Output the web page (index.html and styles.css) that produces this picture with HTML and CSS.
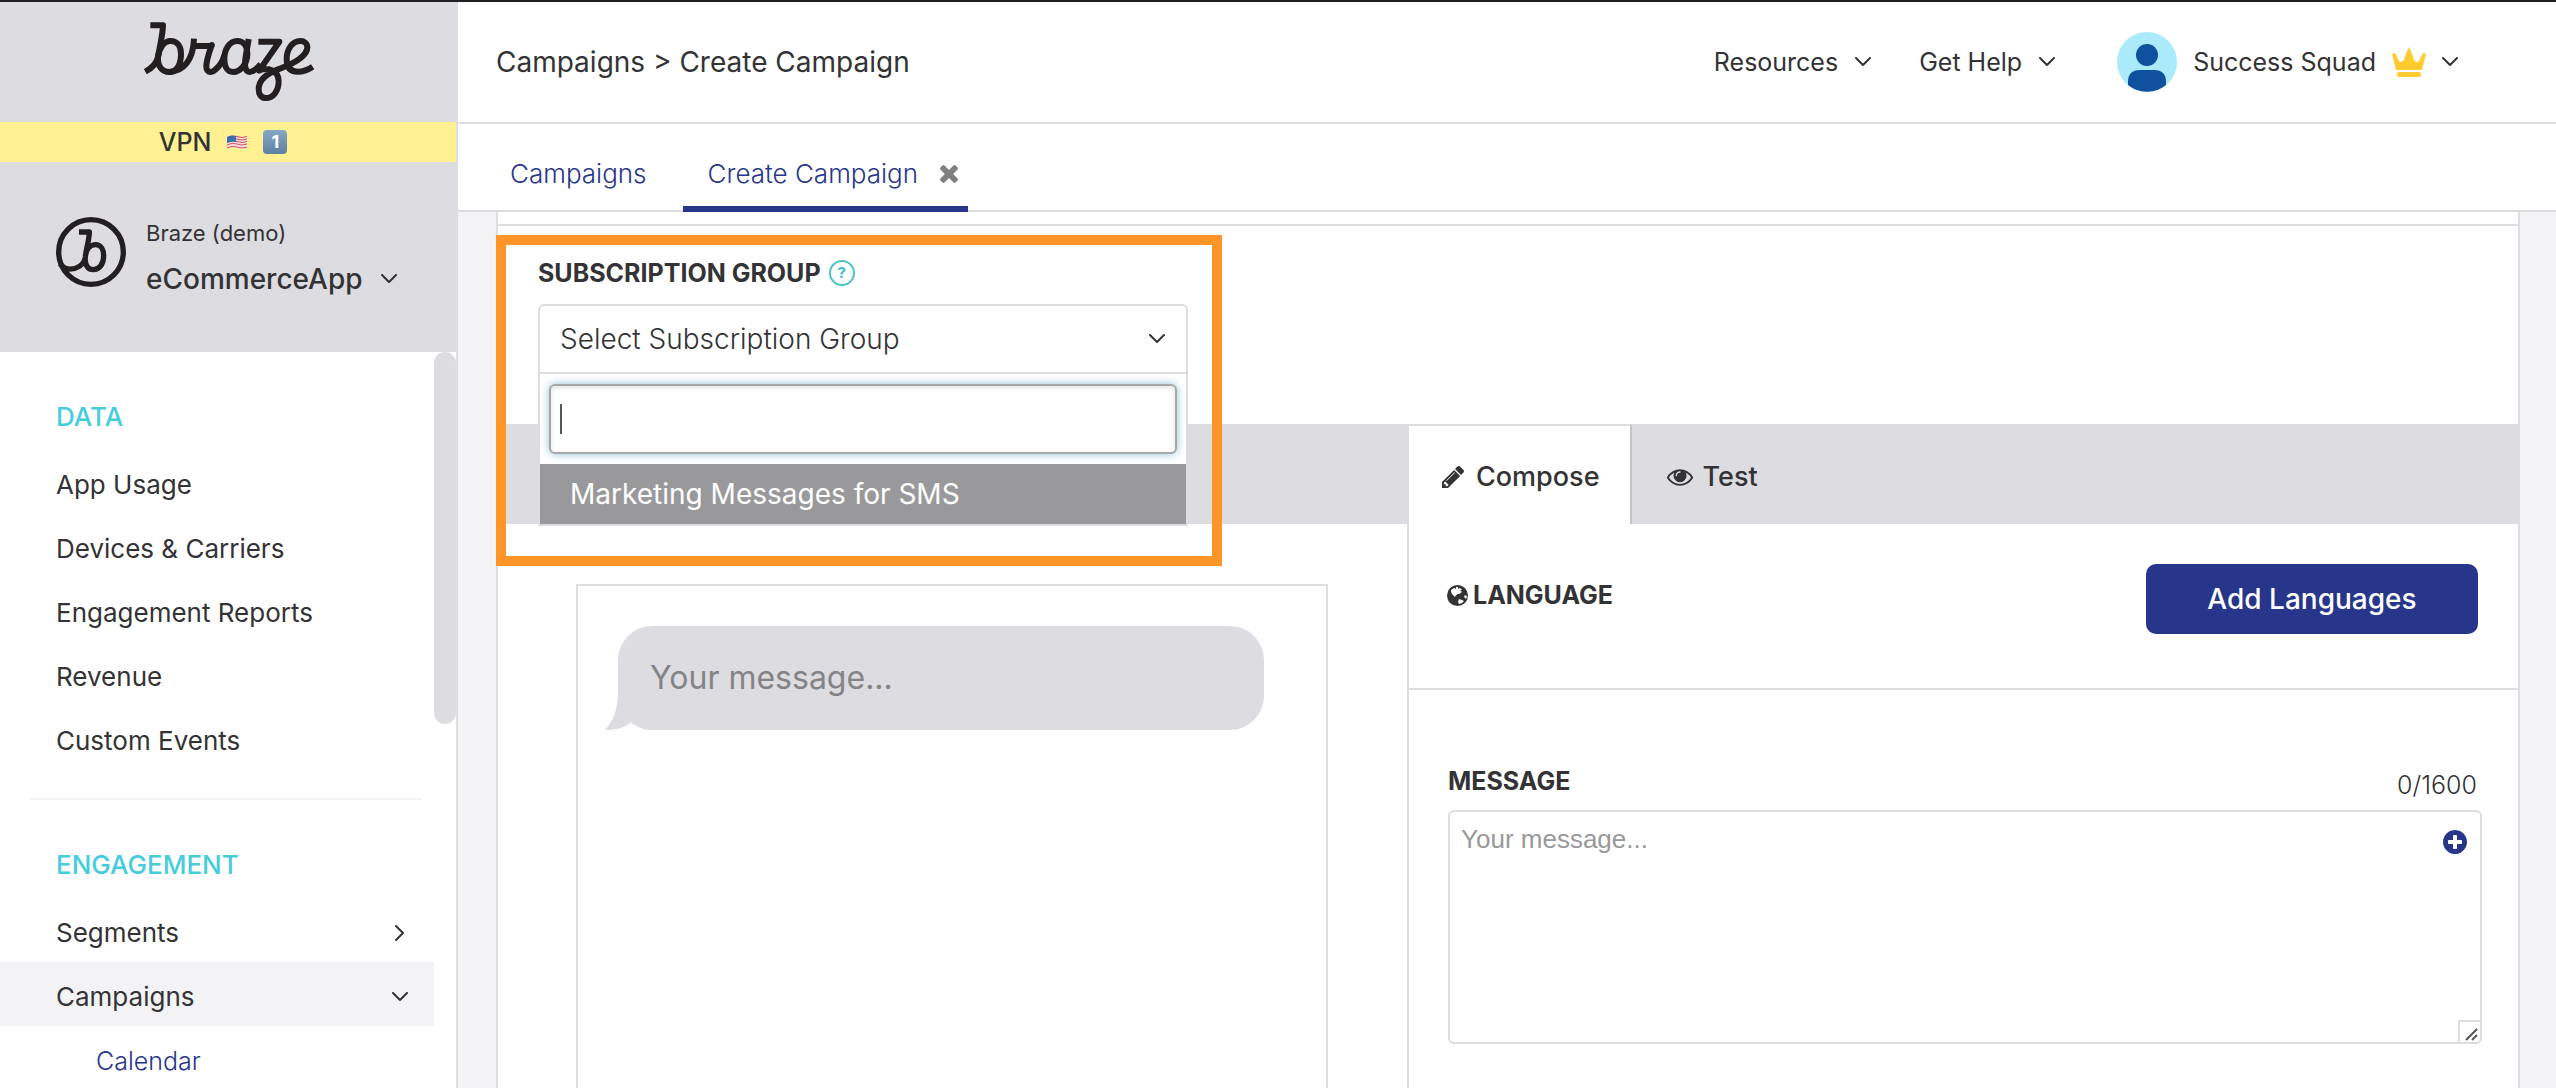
FILE: index.html
```
<!DOCTYPE html>
<html lang="en">
<head>
<meta charset="utf-8">
<title>Create Campaign</title>
<link rel="stylesheet" href="styles.css">
</head>
<body>
<svg class="sprite" aria-hidden="true">
  <symbol id="chevron" viewBox="0 0 16 10"><path d="M1 1l7 7 7-7" fill="none" stroke="currentColor" stroke-width="2" stroke-linecap="round" stroke-linejoin="round"/></symbol>
</svg>
<div class="app">
  <aside class="sidebar">
    <div class="brand">
      <svg width="170" height="80" viewBox="432 62 510 240" role="img" aria-label="Braze" fill="none" stroke="#231f20" stroke-width="18" stroke-linecap="butt" stroke-linejoin="round">
        <path d="M451 75H489C488 105 479 140 474 170C469 192 455 204 436 214"/>
        <path d="M474 170C478 142 492 122 512 122C532 122 543 138 543 160C543 192 531 215 508 215C485 215 472 196 474 170"/>
        <path d="M508 215C550 213 580 180 582 115"/>
        <path d="M579 137H632C637 137 636 130 634 137C626 160 619 180 619 198C619 214 630 219 642 211C655 202 668 185 673 165"/>
        <path d="M742 160C742 137 730 122 712 122C688 122 673 148 673 175C673 200 683 215 699 215C722 215 742 190 742 160"/>
        <path d="M746 116C742 145 735 170 735 192C735 212 745 218 757 213C768 208 775 200 782 192"/>
        <path d="M775 124H838L777 211C800 200 836 208 836 243C836 274 818 293 798 293C783 293 776 282 776 267C776 232 810 215 842 204C885 188 922 165 922 141C922 129 913 122 901 122C876 122 860 148 860 176C860 202 872 214 893 214C912 214 926 207 938 199"/>
      </svg>
    </div>
    <div class="vpn">
      <span>VPN</span>
      <svg width="22" height="17" viewBox="0 0 22 17" role="img" aria-label="US flag">
        <path d="M1 3Q6 0 11 2T21 2V14Q16 16 11 14T1 15Z" fill="#f2dfe0"/>
        <g fill="none" stroke="#d9505c" stroke-width="1"><path d="M1 3.500Q6 .5 11 2.500T21 2.500M1 6Q6 3 11 5T21 5M1 8.500Q6 5.500 11 7.500T21 7.500M1 11Q6 8 11 10T21 10M1 14Q6 11 11 13T21 13"/></g>
        <path d="M1 3Q5 1 10 2V8Q5 7 1 9Z" fill="#3d6fae"/>
      </svg>
      <span class="keycap">1</span>
    </div>
    <div class="account">
      <svg width="70" height="70" viewBox="168 650 210 210" aria-hidden="true" fill="none" stroke="#231f20" stroke-linejoin="round">
        <circle cx="273" cy="755" r="97" stroke-width="16"/>
        <path stroke-width="16" d="M237 695H268C268 720 258 745 256 770C253 795 228 808 205 806C195 805 187 798 180 790M256 770C258 745 272 733 287 733C304 733 311 750 311 766C311 790 299 808 280 808C262 808 254 792 256 770"/>
      </svg>
      <div class="account-text">
        <span class="company">Braze (demo)</span>
        <button class="app-switch" type="button">eCommerceApp <svg width="16" height="10"><use href="#chevron"/></svg></button>
      </div>
    </div>
    <div class="nav-scroll">
      <nav class="nav">
        <h2 class="nav-title">DATA</h2>
        <ul>
          <li><a href="#">App Usage</a></li>
          <li><a href="#">Devices &amp; Carriers</a></li>
          <li><a href="#">Engagement Reports</a></li>
          <li><a href="#">Revenue</a></li>
          <li><a href="#">Custom Events</a></li>
        </ul>
        <hr>
        <h2 class="nav-title">ENGAGEMENT</h2>
        <ul>
          <li><a href="#">Segments <svg class="closed" width="16" height="10"><use href="#chevron"/></svg></a></li>
          <li class="open"><a href="#">Campaigns <svg width="16" height="10"><use href="#chevron"/></svg></a></li>
          <li class="child"><a href="#">Calendar</a></li>
        </ul>
      </nav>
      <div class="scrollbar"><div class="thumb"></div></div>
    </div>
  </aside>

  <main class="main">
    <header class="topbar">
      <h1>Campaigns &gt; Create Campaign</h1>
      <div class="menus">
        <button class="menu" type="button">Resources <svg width="16" height="10"><use href="#chevron"/></svg></button>
        <button class="menu" type="button">Get Help <svg width="16" height="10"><use href="#chevron"/></svg></button>
        <button class="menu user" type="button">
          <svg class="avatar" width="60" height="60" viewBox="0 0 60 60" aria-hidden="true">
            <circle cx="30" cy="30" r="30" fill="#abeafa"/>
            <circle cx="30" cy="23" r="11" fill="#0f509f"/>
            <path d="M11 53V50Q11 38 23 38H37Q49 38 49 50V53A30 30 0 0 1 11 53Z" fill="#0f509f"/>
          </svg>
          Success Squad
          <svg width="34" height="30" viewBox="0 0 34 30" aria-hidden="true" fill="#ffcb2f">
            <path d="M0 7L3 6 7 14Q9 16 11 14 13 12 13 9L17 0 21 9Q21 12 23 14 25 16 27 14L31 6 34 7 30 23H4Z"/>
            <rect x="5" y="25" width="24" height="5" rx="2"/>
          </svg>
          <svg width="16" height="10"><use href="#chevron"/></svg>
        </button>
      </div>
    </header>
    <nav class="tabs">
      <a href="#">Campaigns</a>
      <a href="#" class="active">Create Campaign
        <svg width="18" height="18" viewBox="302 366 1188 1188" fill="#7f7f7f" aria-label="Close tab"><path d="M1490 1322q0 40-28 68l-136 136q-28 28-68 28t-68-28l-294-294-294 294q-28 28-68 28t-68-28l-136-136q-28-28-28-68t28-68l294-294-294-294q-28-28-28-68t28-68l136-136q28-28 68-28t68 28l294 294 294-294q28-28 68-28t68 28l136 136q28 28 28 68t-28 68l-294 294 294 294q28 28 28 68z"/></svg>
      </a>
    </nav>

    <div class="panel">
      <section class="subscription">
        <label class="label" for="group">SUBSCRIPTION GROUP <span class="help">?</span></label>
        <div class="picker">
          <select id="group"><option>Select Subscription Group</option></select>
          <svg class="picker-arrow" width="16" height="10"><use href="#chevron"/></svg>
          <div class="dropdown">
            <div class="search">
              <input type="text" aria-label="Search subscription groups">
              <span class="caret"></span>
            </div>
            <ul role="listbox"><li role="option" aria-selected="true">Marketing Messages for SMS</li></ul>
          </div>
        </div>
        <div class="highlight"></div>
      </section>

      <section class="composer">
        <div class="preview">
          <div class="band"></div>
          <div class="phone">
            <div class="bubble">Your message...
              <svg class="tail" width="30" height="40" viewBox="0 0 30 40" aria-hidden="true"><path d="M13 0C13 20 8 31 0 40C9 40 18 39 25 33L30 0Z" fill="#dddce1"/></svg>
            </div>
          </div>
        </div>
        <div class="editor">
          <div class="editor-tabs">
            <button class="editor-tab active" type="button">
              <svg width="22" height="22" viewBox="128 149 1515 1515" fill="currentColor" aria-hidden="true"><path d="M491 1536l91-91-235-235-91 91v107h128v128h107zm523-928q0-22-22-22-10 0-17 7l-542 542q-7 7-7 17 0 22 22 22 10 0 17-7l542-542q7-7 7-17zm-54-192l416 416-832 832h-416v-416zm683 96q0 53-37 90l-166 166-416-416 166-165q36-38 90-38 53 0 91 38l235 234q37 39 37 91z"/></svg>
              Compose</button>
            <button class="editor-tab" type="button">
              <svg width="26" height="17" viewBox="0 384 1792 1152" fill="currentColor" aria-hidden="true"><path d="M1664 960q-152-236-381-353 61 104 61 225 0 185-131.500 316.500t-316.500 131.500-316.500-131.500-131.500-316.500q0-121 61-225-229 117-381 353 133 205 333.500 326.500t434.500 121.500 434.500-121.500 333.500-326.500zm-720-384q0-20-14-34t-34-14q-125 0-214.500 89.500t-89.500 214.500q0 20 14 34t34 14 34-14 14-34q0-86 61-147t147-61q20 0 34-14t14-34zm848 384q0 34-20 69-140 230-376.500 368.500t-499.500 138.500-499.500-139-376.500-368q-20-35-20-69t20-69q140-229 376.500-368t499.500-139 499.500 139 376.500 368q20 35 20 69z"/></svg>
              Test</button>
          </div>
          <div class="language">
            <h3 class="label">
              <svg width="21" height="21" viewBox="0 0 21 21" aria-hidden="true"><circle cx="10.500" cy="10.500" r="10.500" fill="#333335"/><g fill="#fff"><path d="M4 5L7 3 9 4 9 2 11 2 11 4 13 3 15 5 13 5 15 7 12 9 10 9 10 10 9 10 8 12 5 9 4 7Z" /><path d="M12 14L15 15 17 16 15 18 12 19 11 17Z"/><path d="M18 10L20 11 19 14 17 12Z"/></g></svg>
              LANGUAGE</h3>
            <button class="primary" type="button">Add Languages</button>
          </div>
          <div class="message">
            <div class="message-head">
              <label class="label" for="message">MESSAGE</label>
              <span class="count">0/1600</span>
            </div>
            <div class="message-box">
              <textarea id="message" placeholder="Your message..."></textarea>
              <button class="add" type="button" aria-label="Add personalization"><svg width="24" height="24" viewBox="128 128 1536 1536" fill="#27368b" aria-hidden="true"><path d="M1344 960v-128q0-26-19-45t-45-19h-256v-256q0-26-19-45t-45-19h-128q-26 0-45 19t-19 45v256h-256q-26 0-45 19t-19 45v128q0 26 19 45t45 19h256v256q0 26 19 45t45 19h128q26 0 45-19t19-45v-256h256q26 0 45-19t19-45zm320-64q0 209-103 385.500t-279.500 279.500-385.500 103-385.500-103-279.500-279.500-103-385.500 103-385.500 279.500-279.500 385.500-103 385.500 103 279.500 279.500 103 385.500z"/></svg></button>
              <svg class="grip" width="22" height="22" viewBox="0 0 22 22" aria-hidden="true"><path d="M1 22V1H22" fill="none" stroke="#dcdce1" stroke-width="2"/><path d="M8 20L19 9M14 20L19 15" stroke="#555" stroke-width="2"/></svg>
            </div>
          </div>
        </div>
      </section>
    </div>
  </main>
</div>
</body>
</html>
```
FILE: styles.css
```
:root {
  --ink: #333335;
  --line: #dcdce1;
  --band: #dddce1;
  --navy: #27368b;
  --wash: #f3f3f5;
}

* { box-sizing: border-box; margin: 0; padding: 0; }

body {
  height: 100vh;
  overflow: hidden;
  background: var(--wash);
  color: var(--ink);
  font: 400 26px/32px Inter, "Liberation Sans", sans-serif;
}

ul { list-style: none; }
a { color: inherit; text-decoration: none; }
button { border: 0; background: none; color: inherit; font: inherit; cursor: pointer; }
svg { flex: none; }
.sprite { display: none; }

.app {
  display: flex;
  height: 100%;
  border-top: 2px solid #231f20;
}

/* Sidebar */
.sidebar {
  display: flex;
  flex: none;
  flex-direction: column;
  width: 458px;
  border-right: 2px solid var(--band);
  background: #fff;
}
.brand {
  display: flex;
  flex: none;
  justify-content: center;
  height: 120px;
  padding: 19px 0 0 2px;
  background: var(--band);
}
.vpn {
  display: flex;
  flex: none;
  align-items: center;
  justify-content: center;
  gap: 15px;
  height: 40px;
  padding-right: 10px;
  background: #fff191;
  font-size: 25px;
  font-weight: 500;
}
.keycap {
  width: 24px;
  border-radius: 4px;
  background: linear-gradient(#86a9c6, #5f7f9f);
  color: #fff;
  font-size: 18px;
  font-weight: 700;
  line-height: 24px;
  text-align: center;
}
.account {
  display: flex;
  flex: none;
  gap: 20px;
  height: 190px;
  padding: 55px 56px;
  background: var(--band);
}
.account-text { display: flex; flex-direction: column; gap: 10px; align-items: flex-start; }
.company { font-size: 22px; }
.app-switch {
  display: flex;
  gap: 18px;
  align-items: center;
  font-size: 28px;
  font-weight: 500;
  line-height: 40px;
}
.nav-scroll { display: flex; flex: 1; min-height: 0; }
.nav { flex: 1; overflow: hidden; }
.nav hr { height: 2px; margin: 28px 12px 0 30px; border: 0; background: var(--wash); }
.nav-title {
  padding: 48px 0 16px 56px;
  color: #45cddc;
  font-size: 26px;
  font-weight: 500;
  line-height: 34px;
}
.nav a {
  display: flex;
  align-items: center;
  justify-content: space-between;
  height: 64px;
  padding: 6px 26px 0 56px;
}
.nav .closed { transform: rotate(-90deg); }
.nav .open { background: var(--wash); }
.nav .child { padding-left: 40px; color: var(--navy); font-size: 25px; font-weight: 300; }
.scrollbar { width: 22px; }
.thumb { height: 372px; border-radius: 11px; background: var(--band); }

/* Top bar and tabs */
.main { display: flex; flex: 1; flex-direction: column; min-width: 0; }
.topbar {
  display: flex;
  flex: none;
  align-items: center;
  justify-content: space-between;
  height: 122px;
  padding: 0 98px 0 38px;
  border-bottom: 2px solid var(--line);
  background: #fff;
}
.topbar h1 { font-size: 28px; font-weight: 400; }
.menus { display: flex; align-items: center; gap: 48px; }
.menu { display: flex; align-items: center; gap: 17px; font-size: 25px; }
.user { gap: 16px; padding-left: 14px; }
.tabs {
  display: flex;
  flex: none;
  gap: 36px;
  height: 88px;
  padding-left: 52px;
  border-bottom: 2px solid var(--line);
  background: #fff;
  color: var(--navy);
  font-weight: 300;
}
.tabs a { display: flex; align-items: center; gap: 22px; height: 88px; padding-top: 12px; }
.tabs .active { padding: 18px 10px 0 25px; border-bottom: 6px solid var(--navy); }

/* Campaign panel */
.panel {
  display: flex;
  flex: 1;
  flex-direction: column;
  min-height: 0;
  margin: 0 36px 0 38px;
  padding-top: 12px;
  border: solid var(--line);
  border-width: 0 2px;
  background: #fff;
}
.label {
  display: flex;
  align-items: center;
  gap: 8px;
  font-size: 25px;
  font-weight: 700;
}
.subscription {
  position: relative;
  flex: none;
  padding: 31px 40px 50px;
  border-top: 2px solid var(--line);
}
.help {
  width: 26px;
  border: 2px solid #4fc4c4;
  border-radius: 13px;
  color: #3fbfc0;
  font-size: 15px;
  line-height: 22px;
  text-align: center;
}
.picker { position: relative; z-index: 1; width: 650px; margin-top: 15px; }
.picker select {
  display: block;
  width: 100%;
  height: 70px;
  padding: 0 20px;
  appearance: none;
  border: 2px solid var(--line);
  border-radius: 6px 6px 0 0;
  background: #fff;
  color: var(--ink);
  font: 300 28px/32px Inter, sans-serif;
}
.picker-arrow { position: absolute; top: 30px; right: 23px; }
.dropdown {
  position: absolute;
  top: 100%;
  left: 0;
  width: 100%;
  border: 2px solid var(--line);
  border-top: 0;
  background: #fff;
}
.search { position: relative; padding: 10px 9px; }
.search input {
  display: block;
  width: 100%;
  height: 70px;
  padding: 0 8px;
  border: 2px solid #a7a7a7;
  border-radius: 6px;
  box-shadow: 0 0 8px #8fc0d3, inset 0 2px 5px #e4e4e4;
  font: inherit;
}
.caret { position: absolute; top: 30px; left: 20px; width: 2px; height: 30px; background: #555; }
.dropdown li {
  padding: 14px 30px;
  background: #99999b;
  color: #fff;
  font-size: 28px;
}
.highlight {
  position: absolute;
  z-index: 2;
  top: 9px;
  left: -2px;
  width: 726px;
  height: 331px;
  border: 10px solid #ff9526;
  pointer-events: none;
}

.composer { display: grid; flex: 1; grid-template-columns: 9fr 11fr; min-height: 0; }
.preview { display: flex; flex-direction: column; }
.band { height: 100px; background: var(--band); }
.phone {
  flex: 1;
  margin: 60px 79px 0 78px;
  padding: 40px 62px 0 40px;
  border: 2px solid var(--line);
  border-bottom: 0;
}
.bubble {
  position: relative;
  padding: 32px;
  border-radius: 34px;
  background: var(--band);
  color: #848486;
  font-size: 32px;
  line-height: 40px;
}
.tail { position: absolute; bottom: 0; left: -13px; }

.editor { border-left: 2px solid var(--line); }
.editor-tabs { display: flex; height: 100px; background: var(--band); }
.editor-tab {
  display: flex;
  align-items: center;
  gap: 10px;
  padding: 6px 30px 0 35px;
  font-size: 27px;
  font-weight: 500;
}
.editor-tab.active {
  gap: 12px;
  padding: 4px 30px 0 33px;
  border: solid var(--line);
  border-width: 2px 2px 0 0;
  border-right-color: #c4c3c8;
  background: #fff;
}
.language {
  display: flex;
  align-items: flex-start;
  justify-content: space-between;
  padding: 40px 40px 54px 38px;
  border-bottom: 2px solid var(--line);
}
.language .label { gap: 5px; padding-top: 15px; }
.primary {
  width: 332px;
  height: 70px;
  border-radius: 10px;
  background: var(--navy);
  color: #fff;
  font-size: 28px;
  font-weight: 500;
}
.message { padding: 74px 36px 44px 39px; }
.message-head { display: flex; align-items: flex-start; justify-content: space-between; padding: 0 5px 4px 0; }
.message-head .label { line-height: 34px; }
.count { font-size: 25px; font-weight: 300; line-height: 42px; }
.message-box { position: relative; }
.message-box textarea {
  display: block;
  width: 100%;
  height: 234px;
  padding: 12px 11px;
  resize: none;
  border: 2px solid var(--line);
  border-radius: 6px;
  font: 26px/30px "Liberation Sans", Arial, sans-serif;
}
.message-box textarea::placeholder { color: #999; }
.add { position: absolute; top: 20px; right: 15px; width: 24px; height: 24px; line-height: 0; }
.grip { position: absolute; right: 2px; bottom: 2px; }
```
